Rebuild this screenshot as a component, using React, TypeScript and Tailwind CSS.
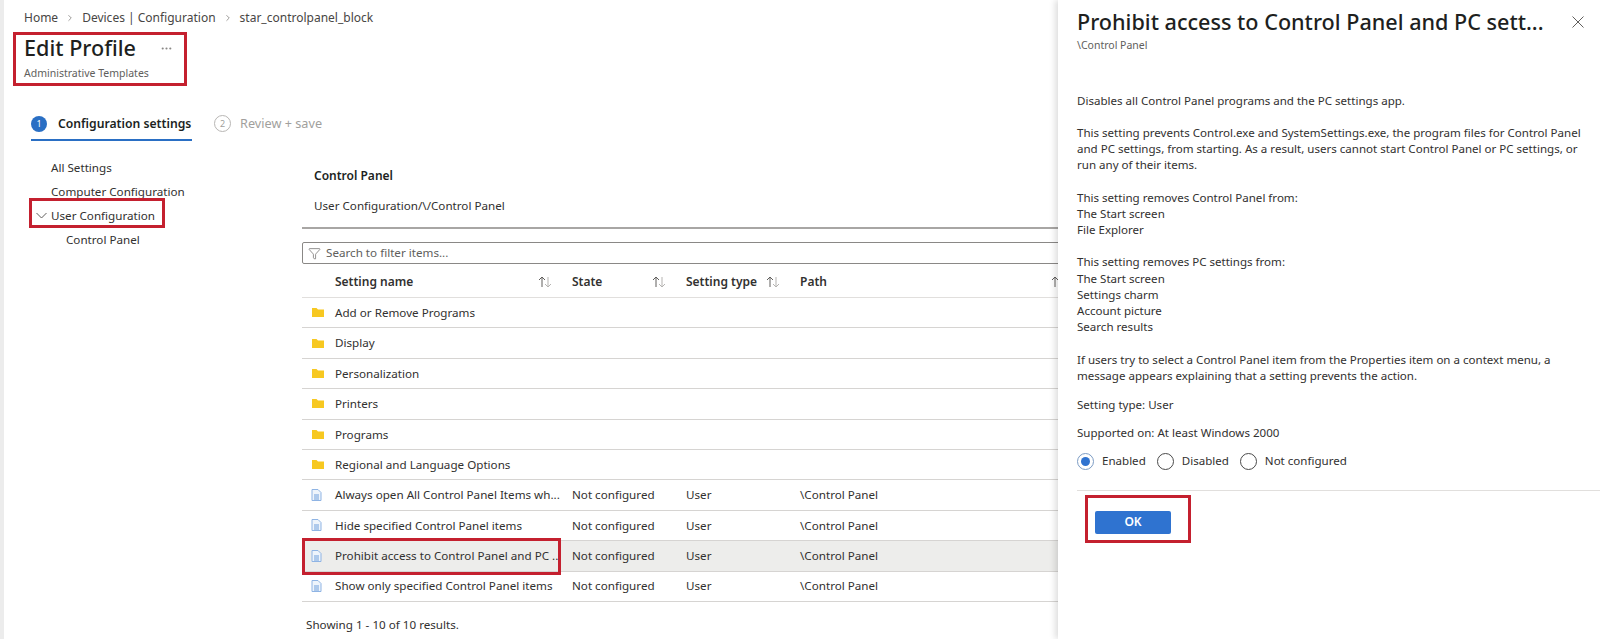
import { ChevronRight, Ellipsis, Filter } from 'lucide-react'

const font = "font-['Noto_Sans','Open_Sans',sans-serif]"

const rows = [
	{ name: 'Add or Remove Programs', folder: true },
	{ name: 'Display', folder: true },
	{ name: 'Personalization', folder: true },
	{ name: 'Printers', folder: true },
	{ name: 'Programs', folder: true },
	{ name: 'Regional and Language Options', folder: true },
	{ name: 'Always open All Control Panel Items wh...' },
	{ name: 'Hide specified Control Panel items' },
	{ name: 'Prohibit access to Control Panel and PC ..', selected: true },
	{ name: 'Show only specified Control Panel items' }
]

const columns = 'grid grid-cols-[33px_237px_114px_114px_1fr]'

function FolderIcon() {
	return (
		<svg width="12" height="9" viewBox="0 0 12 9">
			<path d="M0 0h4.5L6 1.5h6V9H0z" fill="#f7c821" />
		</svg>
	)
}

function FileIcon() {
	return (
		<svg className="-ml-[3px]" width="11" height="12" viewBox="0 0 11 12">
			<path d="M1 .5h6l3 3v8H1z" fill="#eef4fb" stroke="#8fb4e4" />
			<path d="M3 6h5M3 8h5M3 10h5" stroke="#6f9fdc" />
		</svg>
	)
}

function SortIcon() {
	return (
		<svg width="16" height="12" viewBox="0 0 16 12" fill="none">
			<path d="M5 11V1M2 4l3-3 3 3" stroke="#605e5c" />
			<path d="M11 1v10M8 8l3 3 3-3" stroke="#b5b3b1" />
		</svg>
	)
}

function HeaderCell({ label, width }: { label: string; width: string }) {
	return (
		<div className={`flex items-center justify-between text-[12px] font-semibold ${width}`}>
			<span>{label}</span>
			<SortIcon />
		</div>
	)
}

function Radio({ label, checked }: { label: string; checked?: boolean }) {
	return (
		<div className="flex items-center gap-2">
			<span
				className={`flex size-[17px] items-center justify-center rounded-full border ${checked ? 'border-[#7c9cc4]' : 'border-[#4a4a4a]'}`}
			>
				{checked && <span className="size-[9px] rounded-full bg-[#2f73d0]" />}
			</span>
			<span>{label}</span>
		</div>
	)
}

function Lines({ lines, last }: { lines: string[]; last?: boolean }) {
	return (
		<p className={last ? 'mb-[12.5px]' : 'mb-[16.2px]'}>
			{lines.map(line => (
				<span
					key={line}
					className="block whitespace-nowrap"
				>
					{line}
				</span>
			))}
		</p>
	)
}

export default function App() {
	return (
		<div
			className={`${font} relative flex h-[639px] w-[1600px] overflow-hidden bg-white text-[11.65px] text-[#323130]`}
		>
			<div className="w-[4px] shrink-0 bg-[#ececec]" />

			<main className="w-[1054px] shrink-0">
				<nav className="ml-[20px] mt-[9px] flex h-[17px] items-center gap-[7px] text-[12px] text-[#484644]">
					<span>Home</span>
					<ChevronRight className="size-[10px] text-[#8a8886]" />
					<span>Devices | Configuration</span>
					<ChevronRight className="size-[10px] text-[#8a8886]" />
					<span>star_controlpanel_block</span>
				</nav>

				<div className="ml-[20px] mt-[6px] flex h-[32px] items-center">
					<h1 className="text-[21.6px] font-medium text-[#201f1e]">Edit Profile</h1>
					<Ellipsis className="ml-[24px] size-[13px] text-[#8a8886]" />
				</div>
				<div className="ml-[20px] mt-[2px] text-[10.5px] leading-[14px] text-[#605e5c]">
					Administrative Templates
				</div>

				<div className="ml-[27px] mt-[30px] flex items-center">
					<div className="flex h-[31px] w-[161px] items-center gap-[11px] border-b-2 border-[#2a6fc4] pb-[1px]">
						<span className="flex size-[16px] items-center justify-center rounded-full bg-[#2a6fc4] text-[9px] text-white">
							1
						</span>
						<span className="whitespace-nowrap text-[12.2px] font-semibold text-[#201f1e]">
							Configuration settings
						</span>
					</div>
					<div className="ml-[22px] flex items-center gap-[9px] pb-[3px] text-[#a19f9d]">
						<span className="flex size-[17px] items-center justify-center rounded-full border border-[#b8b6b4] text-[9px]">
							2
						</span>
						<span className="text-[12.7px]">Review + save</span>
					</div>
				</div>

				<div className="flex">
					<aside className="w-[298px] shrink-0 pt-[15px]">
						<div className="ml-[47px] flex h-[23.8px] items-center">All Settings</div>
						<div className="ml-[47px] flex h-[23.8px] items-center">Computer Configuration</div>
						<div className="ml-[32px] flex h-[23.8px] items-center gap-[4px]">
							<svg
								width="11"
								height="7"
								viewBox="0 0 11 7"
								fill="none"
							>
								<path
									d="M.5 1l5 5 5-5"
									stroke="#605e5c"
								/>
							</svg>
							User Configuration
						</div>
						<div className="ml-[62px] flex h-[23.8px] items-center">Control Panel</div>
					</aside>

					<section className="w-[760px] shrink-0 pt-[25px]">
						<h2 className="ml-[12px] h-[20px] text-[12px] font-semibold leading-[20px] text-[#201f1e]">
							Control Panel
						</h2>
						<p className="ml-[12px] mt-[10px] h-[20px] leading-[20px]">User Configuration/\/Control Panel</p>
						<div className="mt-[11px] h-[2px] bg-[#a8a6a4]" />
						<div className="mt-[13px] flex h-[22px] items-center gap-[5px] rounded-[2px] border border-[#8a8886] pl-[5px] text-[#605e5c]">
							<Filter
								className="size-[13px]"
								strokeWidth={1.25}
							/>
							Search to filter items...
						</div>

						<div className={`${columns} h-[34px] items-center border-b border-[#e1dfdd] pt-[2px] text-[#323130]`}>
							<span />
							<HeaderCell
								label="Setting name"
								width="w-[218px]"
							/>
							<HeaderCell
								label="State"
								width="w-[95px]"
							/>
							<HeaderCell
								label="Setting type"
								width="w-[95px]"
							/>
							<HeaderCell
								label="Path"
								width="w-[266px]"
							/>
						</div>

						{rows.map(row => (
							<div
								key={row.name}
								className={`${columns} h-[30.4px] items-center border-b border-[#d6d4d2] ${row.selected ? 'bg-[#ededeb]' : ''}`}
							>
								<span className="flex justify-center pl-[2px] pr-[3px]">
									{row.folder ? <FolderIcon /> : <FileIcon />}
								</span>
								<span className="whitespace-nowrap">{row.name}</span>
								{!row.folder && (
									<>
										<span>Not configured</span>
										<span>User</span>
										<span>\Control Panel</span>
									</>
								)}
							</div>
						))}

						<p className="ml-[4px] mt-[14px] leading-[18px]">Showing 1 - 10 of 10 results.</p>
					</section>
				</div>
			</main>

			<aside className="z-10 flex-1 bg-white text-[11.55px] shadow-[-3px_0_6px_rgba(0,0,0,0.13)]">
				<div className="flex items-center justify-between pl-[19px] pr-[16px] pt-[7px]">
					<h2 className="whitespace-nowrap text-[21.6px] font-medium leading-[30px] text-[#201f1e]">
						Prohibit access to Control Panel and PC sett...
					</h2>
					<svg
						width="12"
						height="12"
						viewBox="0 0 12 12"
						fill="none"
					>
						<path
							d="M.5.5l11 11M11.5.5l-11 11"
							stroke="#605e5c"
						/>
					</svg>
				</div>
				<div className="ml-[19px] mt-[1px] text-[10.5px] leading-[14px] text-[#605e5c]">\Control Panel</div>

				<div className="ml-[19px] mt-[40.5px] leading-[16.2px]">
					<Lines lines={['Disables all Control Panel programs and the PC settings app.']} />
					<Lines
						lines={[
							'This setting prevents Control.exe and SystemSettings.exe, the program files for Control Panel',
							'and PC settings, from starting. As a result, users cannot start Control Panel or PC settings, or',
							'run any of their items.'
						]}
					/>
					<Lines lines={['This setting removes Control Panel from:', 'The Start screen', 'File Explorer']} />
					<Lines
						lines={[
							'This setting removes PC settings from:',
							'The Start screen',
							'Settings charm',
							'Account picture',
							'Search results'
						]}
					/>
					<Lines
						last
						lines={[
							'If users try to select a Control Panel item from the Properties item on a context menu, a',
							'message appears explaining that a setting prevents the action.'
						]}
					/>
					<p className="mb-[12px]">Setting type: User</p>
					<p>Supported on: At least Windows 2000</p>
					<div className="mt-[11.5px] flex items-center gap-[11px]">
						<Radio
							label="Enabled"
							checked
						/>
						<Radio label="Disabled" />
						<Radio label="Not configured" />
					</div>
				</div>

				<div className="ml-[19px] mt-[20px] border-t border-[#e1dfdd] pl-[18px] pt-[20px]">
					<button className="h-[23px] w-[76px] rounded-[2px] bg-[#2f73d0] text-[12px] font-semibold text-white">OK</button>
				</div>
			</aside>

			<div className="absolute left-[13px] top-[32px] z-20 h-[54px] w-[174px] border-[3px] border-[#c4202f]" />
			<div className="absolute left-[29px] top-[198px] z-20 h-[30px] w-[136px] border-[3px] border-[#c4202f]" />
			<div className="absolute left-[302px] top-[538px] z-20 h-[37px] w-[259px] border-[3px] border-[#c4202f]" />
			<div className="absolute left-[1085px] top-[495px] z-20 h-[48px] w-[106px] border-[3px] border-[#c4202f]" />
		</div>
	)
}
